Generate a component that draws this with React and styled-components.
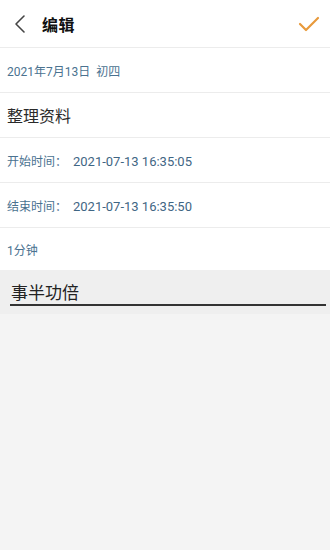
import React, { useState } from 'react';
import styled, { createGlobalStyle } from 'styled-components';

const GlobalStyle = createGlobalStyle`
  html, body {
    margin: 0;
    padding: 0;
    background: #f4f4f4;
    font-family: Roboto, "Noto Sans CJK SC", sans-serif;
  }
`;

const App = () => {
  const [ note, setNote ] = useState('事半功倍');

  const infoRows = [
    { label: '开始时间：', value: '2021-07-13 16:35:05' },
    { label: '结束时间：', value: '2021-07-13 16:35:50' },
  ];

  return (
    <Page>
      <GlobalStyle />
      <Header>
        <BackButton aria-label="back">
          <svg width="12" height="20" viewBox="0 0 12 20">
            <path d="M10 2 L2 10 L10 18" fill="none" stroke="#444" strokeWidth="1.6" strokeLinecap="round" strokeLinejoin="round" />
          </svg>
        </BackButton>
        <Title>编辑</Title>
        <ConfirmButton aria-label="save">
          <svg width="22" height="16" viewBox="0 0 22 16">
            <path d="M2 8 L8 14 L20 2" fill="none" stroke="#e89a3c" strokeWidth="2.2" strokeLinecap="round" strokeLinejoin="round" />
          </svg>
        </ConfirmButton>
      </Header>
      <Row $height={45}>
        <InfoText>2021年7月13日&nbsp;&nbsp;初四</InfoText>
      </Row>
      <Row $height={45}>
        <TaskName>整理资料</TaskName>
      </Row>
      {infoRows.map(({ label, value }) => (
        <Row key={label} $height={45}>
          <InfoText>{label}&nbsp;&nbsp;<Value>{value}</Value></InfoText>
        </Row>
      ))}
      <Row $height={43}>
        <InfoText>1分钟</InfoText>
      </Row>
      <InputArea>
        <NoteInput value={note} onChange={e => setNote(e.target.value)} autoFocus />
      </InputArea>
    </Page>
  );
};

const Page = styled.div`
  width: 330px;
  min-height: 550px;
  background: #f4f4f4;
  display: flex;
  flex-direction: column;
`;

const Header = styled.div`
  height: 47px;
  background: #fff;
  display: flex;
  align-items: center;
  padding: 0 10px 0 14px;
`;

const BackButton = styled.button`
  border: none;
  background: none;
  padding: 0;
  display: flex;
  align-items: center;
  width: 28px;
`;

const Title = styled.div`
  flex: 1;
  font-size: 16px;
  font-weight: bold;
  color: #111;
  letter-spacing: 0.5px;
`;

const ConfirmButton = styled.button`
  border: none;
  background: none;
  padding: 0;
  display: flex;
  align-items: center;
`;

const Row = styled.div`
  height: ${({ $height }) => $height}px;
  background: #fff;
  display: flex;
  align-items: center;
  padding: 0 7px;
  box-sizing: border-box;
  border-top: 1px solid #ececec;
`;

const InfoText = styled.span`
  font-size: 12px;
  color: #4a7290;
`;

const Value = styled.span`
  font-size: 13px;
  color: #3f6684;
`;

const TaskName = styled.span`
  font-size: 16px;
  color: #2a2a2a;
`;

const InputArea = styled.div`
  height: 44px;
  background: #efefef;
  padding: 11px 4px 0 10px;
  box-sizing: border-box;
`;

const NoteInput = styled.input`
  width: 100%;
  box-sizing: border-box;
  border: none;
  border-bottom: 2px solid #333;
  background: transparent;
  font-size: 17px;
  color: #222;
  padding: 0 0 3px 1px;
  outline: none;
  caret-color: #111;
  font-family: Roboto, "Noto Sans CJK SC", sans-serif;
`;

export default App;
